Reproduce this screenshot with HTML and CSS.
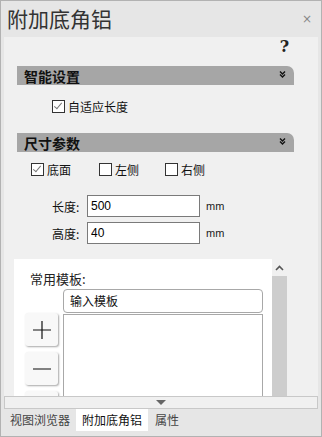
FILE: index.html
```html
<!DOCTYPE html>
<html lang="zh-CN">
<head>
    <meta charset="UTF-8">
    <title>附加底角铝</title>
    <link rel="stylesheet" href="styles.css">
</head>
<body>
    <div class="frame">
        <div class="header">
            <span class="title">附加底角铝</span>
            <span class="close">×</span>
        </div>

        <div class="panel">
            <div class="help-row"><span class="help">?</span></div>

            <div class="section-head">
                <span>智能设置</span>
                <svg class="chev" width="7" height="7" viewBox="0 0 7 7"><path d="M1 0.5 L3.5 3 L6 0.5 M1 3.5 L3.5 6 L6 3.5" fill="none" stroke="#111" stroke-width="1.4"/></svg>
            </div>
            <div class="auto-row">
                <label class="check"><span class="box checked"></span>自适应长度</label>
            </div>

            <div class="section-head second">
                <span>尺寸参数</span>
                <svg class="chev" width="7" height="7" viewBox="0 0 7 7"><path d="M1 0.5 L3.5 3 L6 0.5 M1 3.5 L3.5 6 L6 3.5" fill="none" stroke="#111" stroke-width="1.4"/></svg>
            </div>
            <div class="side-row">
                <label class="check"><span class="box checked"></span>底面</label>
                <label class="check"><span class="box"></span>左侧</label>
                <label class="check"><span class="box"></span>右侧</label>
            </div>

            <div class="field first">
                <span class="label">长度:</span>
                <input class="num" type="text" value="500">
                <span class="unit">mm</span>
            </div>
            <div class="field">
                <span class="label">高度:</span>
                <input class="num" type="text" value="40">
                <span class="unit">mm</span>
            </div>

            <div class="templates">
                <div class="tpl-body">
                    <div class="tpl-title">常用模板:</div>
                    <div class="tpl-grid">
                        <div class="tools">
                            <div class="tool"><svg width="20" height="20" viewBox="0 0 20 20"><path d="M10 1 V19 M1 10 H19" stroke="#111" stroke-width="1.2"/></svg></div>
                            <div class="tool"><svg width="20" height="20" viewBox="0 0 20 20"><path d="M1 10 H19" stroke="#333" stroke-width="1.2"/></svg></div>
                            <div class="tool"></div>
                        </div>
                        <div class="lists">
                            <div class="tpl-input">输入模板</div>
                            <div class="tpl-list"></div>
                        </div>
                    </div>
                </div>
                <div class="scrollbar">
                    <div class="arrow-up"><svg width="9" height="6" viewBox="0 0 9 6"><path d="M1 5 L4.5 1.5 L8 5" fill="none" stroke="#555" stroke-width="1.6"/></svg></div>
                    <div class="track"></div>
                </div>
            </div>
        </div>

        <div class="more-bar"><span class="tri"></span></div>

        <div class="tabs">
            <span class="tab">视图浏览器</span>
            <span class="tab active">附加底角铝</span>
            <span class="tab">属性</span>
        </div>
    </div>
</body>
</html>
```

FILE: styles.css
```css
body {
    margin: 0;
    font-family: "Noto Sans CJK SC", "Liberation Sans", sans-serif;
    background-color: #e6e6e6;
}

.frame {
    width: 322px;
    height: 437px;
    box-sizing: border-box;
    border: 1px solid #b2b2b2;
    background-color: #e6e6e6;
    display: flex;
    flex-direction: column;
}

.header {
    height: 36px;
    flex-shrink: 0;
    display: flex;
    align-items: center;
    justify-content: space-between;
    padding: 0 9px 0 6px;
}

.title {
    font-size: 21px;
    color: #333;
    line-height: 1;
    margin-top: -2px;
}

.close {
    font-size: 12px;
    color: #888;
    font-family: "DejaVu Sans", sans-serif;
}

.panel {
    height: 359px;
    flex-shrink: 0;
    margin: 0 3px;
    background-color: #f0f0f0;
    display: flex;
    flex-direction: column;
    overflow: hidden;
}

.panel > * {
    flex-shrink: 0;
}

.help-row {
    height: 29px;
    display: flex;
    justify-content: flex-end;
    padding-right: 29px;
}

.help {
    font-family: "DejaVu Serif", serif;
    font-weight: bold;
    font-size: 16px;
    line-height: 16px;
    margin-top: 2px;
    color: #222;
}

.section-head {
    height: 19px;
    margin: 0 24px 0 13px;
    background-color: #a6a6a6;
    border-top-right-radius: 7px;
    display: flex;
    align-items: center;
    justify-content: space-between;
    padding: 0 8px 0 7px;
    font-size: 14px;
    font-weight: bold;
    color: #111;
}

.section-head.second {
    margin-top: 20px;
}

.chev {
    margin-top: -3px;
}

.check {
    display: flex;
    align-items: center;
    font-size: 12px;
    color: #111;
    line-height: 13px;
}

.box {
    width: 11px;
    height: 11px;
    border: 1px solid #333;
    background-color: #fff;
    margin-right: 3px;
    position: relative;
}

.box.checked::after {
    content: "";
    position: absolute;
    left: 3px;
    top: 0px;
    width: 3px;
    height: 7px;
    border-right: 1px solid #777;
    border-bottom: 1px solid #777;
    transform: rotate(40deg);
}

.auto-row {
    height: 13px;
    margin-top: 15px;
    padding-left: 48px;
    display: flex;
}

.side-row {
    height: 13px;
    margin-top: 11px;
    padding-left: 27px;
    display: flex;
}

.side-row .check {
    width: 68px;
}

.side-row .check:nth-child(2) {
    width: 66px;
}

.field {
    height: 22px;
    margin-top: 5px;
    display: flex;
    align-items: center;
    padding-left: 48px;
}

.field.first {
    margin-top: 19px;
}

.label {
    width: 35px;
    font-size: 12px;
    color: #111;
}

.num {
    width: 113px;
    height: 22px;
    box-sizing: border-box;
    border: 1px solid #7a7a7a;
    background-color: #fff;
    padding: 0 3px;
    font-family: "Liberation Sans", sans-serif;
    font-size: 12px;
    color: #000;
    outline: none;
}

.unit {
    margin-left: 6px;
    font-family: "Liberation Sans", sans-serif;
    font-size: 11px;
    color: #222;
}

.panel > .templates {
    margin-top: 15px;
    margin-left: 10px;
    flex: 1 1 0;
    min-height: 0;
    display: flex;
    overflow: hidden;
}

.tpl-body {
    width: 258px;
    background-color: #fff;
}

.tpl-title {
    font-size: 13px;
    color: #222;
    padding: 12px 0 0 16px;
    line-height: 16px;
}

.tpl-grid {
    display: flex;
    margin-top: 2px;
    padding-left: 11px;
}

.tools {
    width: 33px;
    padding-top: 24px;
    display: flex;
    flex-direction: column;
    gap: 6px;
    margin-right: 5px;
}

.tool {
    width: 33px;
    height: 33px;
    flex-shrink: 0;
    box-sizing: border-box;
    border-radius: 3px;
    background-color: #f8f8f8;
    box-shadow: 1px 1px 2px rgba(0, 0, 0, 0.35);
    display: flex;
    align-items: center;
    justify-content: center;
}

.lists {
    width: 200px;
}

.tpl-input {
    height: 24px;
    box-sizing: border-box;
    border: 1px solid #a8a8a8;
    border-radius: 4px;
    padding-left: 6px;
    font-size: 12px;
    line-height: 22px;
    color: #111;
}

.tpl-list {
    height: 120px;
    margin-top: 1px;
    border: 1px solid #a8a8a8;
    border-bottom: none;
}

.scrollbar {
    width: 15px;
    display: flex;
    flex-direction: column;
}

.arrow-up {
    height: 17px;
    display: flex;
    align-items: center;
    justify-content: center;
}

.track {
    flex: 1;
    background-color: #cdcdcd;
}

.more-bar {
    height: 11px;
    flex-shrink: 0;
    margin: 0 3px;
    border: 1px solid #c8c8c8;
    background-color: #f0f0f0;
    display: flex;
    align-items: center;
    justify-content: center;
}

.tri {
    width: 0;
    height: 0;
    border-left: 5px solid transparent;
    border-right: 5px solid transparent;
    border-top: 5px solid #666;
}

.tabs {
    height: 22px;
    flex-shrink: 0;
    display: flex;
    padding-left: 9px;
}

.tab {
    font-size: 12px;
    color: #444;
    line-height: 22px;
    margin-right: 7px;
}

.tab.active {
    background-color: #fff;
    color: #111;
    padding: 0 6px;
    margin-left: -1px;
}
```
